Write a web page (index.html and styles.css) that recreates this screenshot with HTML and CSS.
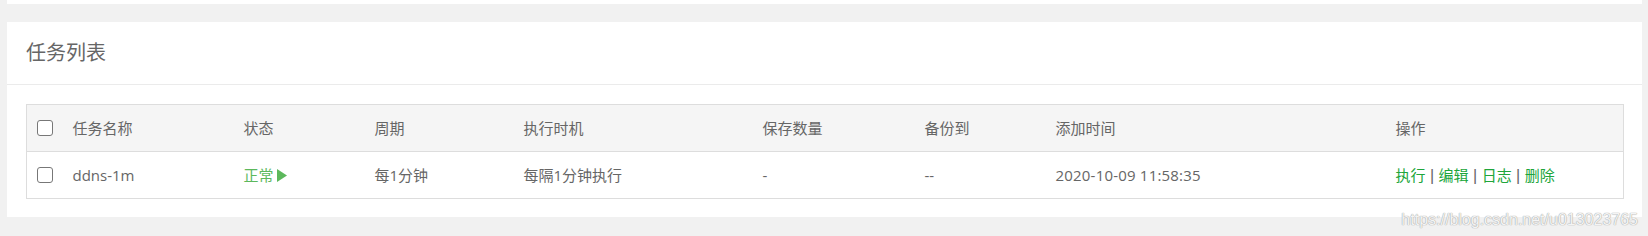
FILE: index.html
```html
<!DOCTYPE html>
<html lang="zh-CN">
<head>
    <meta charset="UTF-8">
    <title>计划任务</title>
    <link rel="stylesheet" href="styles.css">
</head>
<body>
    <div class="page">
        <!--上一个面板的底边-->
        <div class="panel-tail"></div>

        <div class="panel">
            <div class="panel-head">任务列表</div>
            <div class="panel-body">
                <table class="task-table">
                    <colgroup>
                        <col style="width:36px">
                        <col style="width:171px">
                        <col style="width:131px">
                        <col style="width:149px">
                        <col style="width:239px">
                        <col style="width:162px">
                        <col style="width:131px">
                        <col style="width:340px">
                        <col>
                    </colgroup>
                    <thead>
                        <tr>
                            <th><input type="checkbox" class="check"></th>
                            <th>任务名称</th>
                            <th>状态</th>
                            <th>周期</th>
                            <th>执行时机</th>
                            <th>保存数量</th>
                            <th>备份到</th>
                            <th>添加时间</th>
                            <th>操作</th>
                        </tr>
                    </thead>
                    <tbody>
                        <tr>
                            <td><input type="checkbox" class="check"></td>
                            <td>ddns-1m</td>
                            <td><a class="status">正常<svg class="play" width="10" height="13" viewBox="0 0 10 13"><path d="M0 0 L10 6.5 L0 13 Z" fill="#5cb85c"/></svg></a></td>
                            <td>每1分钟</td>
                            <td>每隔1分钟执行</td>
                            <td>-</td>
                            <td>--</td>
                            <td class="latin">2020-10-09 11:58:35</td>
                            <td class="ops"><a class="btlink">执行</a><span class="sep"> | </span><a class="btlink">编辑</a><span class="sep"> | </span><a class="btlink">日志</a><span class="sep"> | </span><a class="btlink">删除</a></td>
                        </tr>
                    </tbody>
                </table>
            </div>
        </div>

        <div class="watermark">https://blog.csdn.net/u013023765</div>
    </div>
</body>
</html>
```

FILE: styles.css
```css
body {
    margin: 0;
    background-color: #f1f1f1;
    font-family: "Open Sans", "Noto Sans CJK SC", sans-serif;
    font-size: 15px;
    color: #666;
}
.page {
    position: relative;
    height: 236px;
    padding: 0 6px 0 7px;
}
.panel-tail {
    height: 4px;
    background-color: #fff;
}
.panel {
    margin-top: 18px;
    background-color: #fff;
}
.panel-head {
    height: 62px;
    line-height: 62px;
    padding-left: 19px;
    font-size: 20px;
    color: #666;
    border-bottom: 1px solid #ebebeb;
}
.panel-body {
    padding: 19px 18px 18px 19px;
}
.task-table {
    width: 100%;
    border-collapse: collapse;
    table-layout: fixed;
    border: 1px solid #ddd;
}
.task-table th,
.task-table td {
    height: 46px;
    padding: 0 10px;
    text-align: left;
    font-weight: normal;
    line-height: 20px;
    white-space: nowrap;
}
.task-table th {
    background-color: #f5f5f5;
    border-bottom: 1px solid #ddd;
}
.latin {
    letter-spacing: 0.2px;
}
.check {
    appearance: none;
    display: block;
    width: 16px;
    height: 16px;
    margin: 0;
    border: 1px solid #777;
    border-radius: 3px;
    background-color: #fff;
}
.status {
    color: #5cb85c;
    cursor: pointer;
}
.play {
    margin-left: 3px;
    vertical-align: -1px;
}
.btlink {
    color: #20a53a;
    cursor: pointer;
}
.sep {
    font-family: "Liberation Sans", Arial, sans-serif;
    font-size: 16px;
    white-space: pre;
}
.watermark {
    position: absolute;
    right: 10px;
    bottom: 7px;
    font-family: "Liberation Sans", Arial, sans-serif;
    font-size: 16px;
    color: #f4f4f4;
    text-shadow: 0 0 1px #9a9a9a, 0 0 1px #b0b0b0;
}
```
